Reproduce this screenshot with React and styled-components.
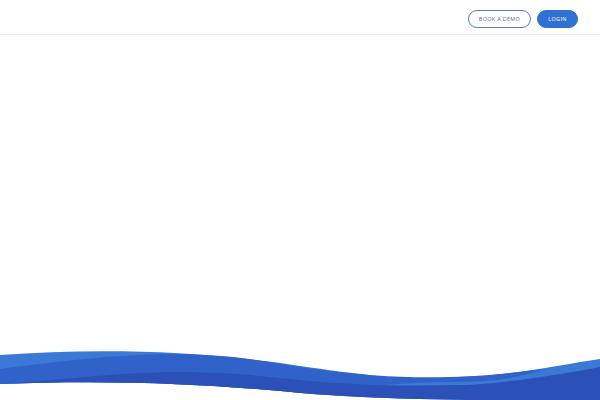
import styled, { createGlobalStyle } from 'styled-components';

const GlobalStyle = createGlobalStyle`
  html, body {
    margin: 0;
    padding: 0;
    background: #ffffff;
    font-family: "Open Sans", "Liberation Sans", sans-serif;
  }
  * { box-sizing: border-box; }
`;

const Page = styled.div`
  display: flex;
  flex-direction: column;
  width: 600px;
  height: 400px;
  overflow: hidden;
  background: #ffffff;
`;

const Header = styled.header`
  height: 35px;
  display: flex;
  align-items: center;
  justify-content: flex-end;
  gap: 6px;
  padding: 3px 22px 0 0;
  border-bottom: 1px solid #ededed;
`;

const PillButton = styled.button`
  height: 18px;
  width: ${(p) => (p.$solid ? '41px' : '63px')};
  padding: 0;
  border-radius: 9px;
  border: 1px solid ${(p) => (p.$solid ? '#3070d2' : '#5a7fb4')};
  background: ${(p) => (p.$solid ? '#3070d2' : '#ffffff')};
  color: ${(p) => (p.$solid ? '#ffffff' : '#557099')};
  font-family: "Open Sans", "Liberation Sans", sans-serif;
  font-size: 5.5px;
  letter-spacing: 0.3px;
  text-transform: uppercase;
  display: flex;
  align-items: center;
  justify-content: center;
  cursor: pointer;
`;

const Main = styled.main`
  flex: 1;
`;

const WaveBox = styled.div`
  height: 60px;
  line-height: 0;
`;

const Wave = () => (
  <svg width="600" height="60" viewBox="0 340 600 60" preserveAspectRatio="none">
    <path
      fill="#3a79d5"
      d="M0,355 C90,349 190,349 300,366 C370,376 410,381 460,378 C520,374 565,364 600,359 L600,400 L470,400 C400,399 350,397 300,393 C220,385 120,379 0,384 Z"
    />
    <path
      fill="#3162c9"
      d="M0,369 C60,361 110,355 170,354 C230,354 270,362 300,367 C370,377 410,378 450,377 C490,376 520,372 545,369 C515,379 490,382 450,382 C400,382 360,388 300,393 C220,385 120,379 0,384 Z"
    />
    <path
      fill="#2b51b8"
      d="M0,384 C60,380 110,373 170,372 C230,372 260,376 300,380 C360,386 410,386 460,385 C500,384 560,375 600,367 L600,400 L470,400 C400,399 350,397 300,393 C220,385 120,379 0,384 Z"
    />
  </svg>
);

export default function App() {
  return (
    <>
      <GlobalStyle />
      <Page>
        <Header>
          <PillButton>Book a demo</PillButton>
          <PillButton $solid>Login</PillButton>
        </Header>
        <Main />
        <WaveBox>
          <Wave />
        </WaveBox>
      </Page>
    </>
  );
}
